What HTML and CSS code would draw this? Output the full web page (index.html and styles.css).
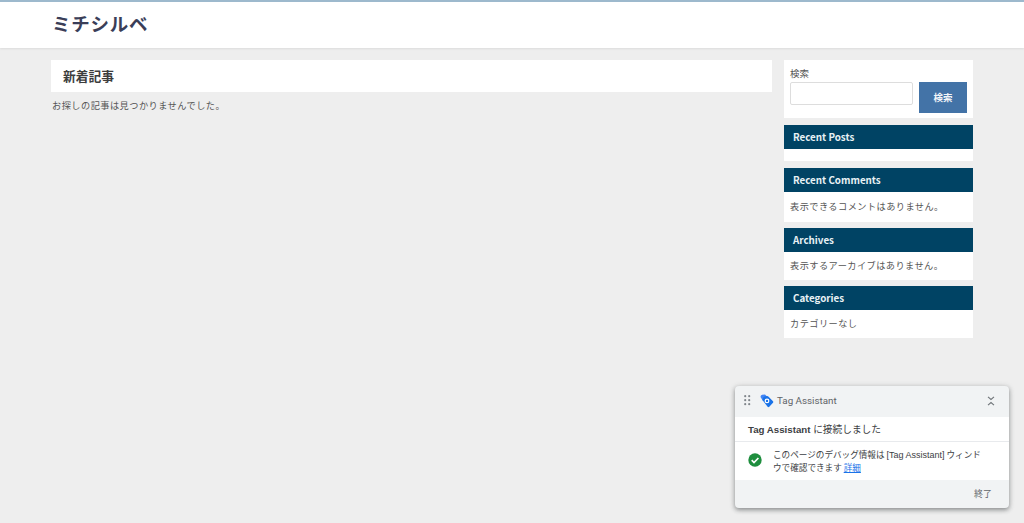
FILE: index.html
```html
<!DOCTYPE html>
<html lang="ja">
<head>
<meta charset="utf-8">
<title>ミチシルベ</title>
<link rel="stylesheet" href="styles.css">
</head>
<body>
<header class="site-header"><div class="logo">ミチシルベ</div></header>
<div class="layout">
  <main class="content">
    <h1 class="page-title">新着記事</h1>
    <p class="not-found">お探しの記事は見つかりませんでした。</p>
  </main>
  <aside class="sidebar">
    <section class="search">
      <div class="search-label">検索</div>
      <div class="search-row">
        <input class="search-input" type="text" aria-label="検索">
        <button class="search-btn" type="button">検索</button>
      </div>
    </section>
    <section class="widget widget-posts"><h2 class="widget-title">Recent Posts</h2></section>
    <section class="widget widget-comments"><h2 class="widget-title">Recent Comments</h2><p class="widget-text">表示できるコメントはありません。</p></section>
    <section class="widget widget-archives"><h2 class="widget-title">Archives</h2><p class="widget-text">表示するアーカイブはありません。</p></section>
    <section class="widget widget-categories"><h2 class="widget-title">Categories</h2><p class="widget-text">カテゴリーなし</p></section>
  </aside>
</div>
<div class="ta-popup">
  <div class="ta-head">
    <svg class="ta-grip" width="7" height="11" viewBox="0 0 7 11"><g fill="#80868b"><circle cx="1.2" cy="1.2" r="1.1"/><circle cx="5.2" cy="1.2" r="1.1"/><circle cx="1.2" cy="5.2" r="1.1"/><circle cx="5.2" cy="5.2" r="1.1"/><circle cx="1.2" cy="9.2" r="1.1"/><circle cx="5.2" cy="9.2" r="1.1"/></g></svg>
    <svg class="ta-logo" width="14" height="14" viewBox="0 0 14 14"><path d="M0.5 3 Q0.5 1 2.2 0.7 L5 0.5 L7.5 3 L3 7 Z" fill="#4285f4"/><path d="M2.6 6.2 Q2.4 3.4 4.4 2.6 L7 2 Q8 2 8.6 2.8 L13 7.3 Q13.7 8 13 8.8 L9.3 12.8 Q8.5 13.6 7.6 12.8 Z" fill="#1a73e8"/><circle cx="7" cy="6.9" r="2.4" fill="#fff"/><circle cx="7" cy="6.9" r="1.2" fill="#1a73e8"/></svg>
    <span class="ta-name">Tag Assistant</span>
    <svg class="ta-collapse" width="8" height="10" viewBox="0 0 8 10"><path d="M1 0.8 L4 3.4 L7 0.8 M1 9.2 L4 6.6 L7 9.2" fill="none" stroke="#6f7478" stroke-width="1.1"/></svg>
  </div>
  <div class="ta-connected"><b class="ta-strong">Tag Assistant</b> に接続しました</div>
  <div class="ta-msg">
    <svg class="ta-check" width="14" height="14" viewBox="0 0 14 14"><circle cx="7" cy="7" r="6.7" fill="#1e8e3e"/><path d="M3.7 7.2 L6 9.5 L10.4 5" fill="none" stroke="#fff" stroke-width="1.7"/></svg>
    <p class="ta-text">このページのデバッグ情報は <span class="ta-latin">[Tag Assistant]</span> ウィンドウで確認できます <a class="ta-link" href="#">詳細</a></p>
  </div>
  <div class="ta-foot"><span class="ta-end">終了</span></div>
</div>
</body>
</html>
```

FILE: styles.css
```css
* { box-sizing: border-box; }
html, body { margin: 0; padding: 0; height: 523px; overflow: hidden; }
body {
  background: #eeeeee;
  color: #444;
  font-family: "Noto Sans CJK JP", "Noto Sans", sans-serif;
  font-size: 10px;
}
.site-header {
  height: 48px;
  background: #fff;
  border-top: 2px solid #9db9cd;
  box-shadow: 0 1px 2px rgba(0,0,0,.08);
  padding-left: 52px;
}
.logo {
  font-size: 18.5px;
  font-weight: 700;
  line-height: 43px;
  color: #3a3e58;
  letter-spacing: .75px;
}
.layout {
  display: flex;
  gap: 12px;
  padding: 12px 0 0 51px;
}
.content { width: 721px; }
.page-title {
  margin: 0;
  height: 32px;
  background: #fff;
  padding-left: 12px;
  font-size: 12.75px;
  font-weight: 700;
  line-height: 32px;
  color: #3d3d3d;
}
.not-found { margin: 6px 0 0 1px; font-size: 9.2px; letter-spacing: .47px; line-height: 15px; color: #555; }
.sidebar { width: 189px; display: flex; flex-direction: column; }
.search { height: 58px; background: #fff; padding: 6px 6px 0; }
.search-label { font-size: 9.5px; line-height: 14px; height: 16px; color: #555; }
.search-row { display: flex; align-items: flex-start; gap: 6px; }
.search-input { width: 123px; height: 23px; border: 1px solid #ddd; border-radius: 2px; background: #fff; padding: 0; }
.search-btn {
  width: 48px; height: 31px; border: 0; padding: 0 0 2px;
  background: #4373a7; color: #f2f5f9;
  font-family: inherit; font-size: 9.5px; font-weight: 700;
}
.widget { background: #fff; margin-top: 7px; }
.widget-posts { height: 36px; }
.widget-comments { height: 54px; margin-top: 7px; }
.widget-archives { height: 52px; margin-top: 6px; }
.widget-categories { height: 52px; margin-top: 6px; }
.widget-title {
  margin: 0;
  height: 24px;
  background: #004364;
  color: #e8f1f5;
  padding-left: 9px;
  font-family: "Noto Sans CJK JP", "Noto Sans", sans-serif;
  font-size: 9.8px;
  font-weight: 700;
  line-height: 24px;
}
.widget-text { margin: 0; padding: 7px 6px 0; font-size: 9.2px; letter-spacing: .45px; line-height: 15px; color: #555; }
.widget-archives .widget-text, .widget-categories .widget-text { padding-top: 6px; }
.ta-popup {
  position: absolute;
  left: 735px;
  top: 386px;
  width: 274px;
  height: 122px;
  border-radius: 4px;
  background: #f1f3f4;
  box-shadow: 0 2px 4px rgba(60,64,67,.45), 0 1px 6px rgba(60,64,67,.2);
  overflow: hidden;
  display: flex;
  flex-direction: column;
  color: #3c4043;
}
.ta-head { height: 31px; display: flex; align-items: center; padding-left: 9px; padding-bottom: 2px; flex: none; }
.ta-grip { margin-right: 9px; }
.ta-logo { margin-right: 3px; }
.ta-name { font-family: "Roboto", "Liberation Sans", sans-serif; font-size: 9.8px; color: #5f6368; }
.ta-collapse { margin-left: auto; margin-right: 14px; }
.ta-connected {
  height: 25px; flex: none; background: #fff;
  border-bottom: 1px solid #e8eaed;
  padding-left: 13px;
  font-family: "Liberation Sans", "Noto Sans CJK JP", sans-serif;
  font-size: 9.7px; line-height: 25px; color: #3c4043;
}
.ta-strong { font-weight: 700; }
.ta-msg { height: 38px; flex: none; background: #fff; display: flex; padding: 6px 24px 0 13px; }
.ta-check { margin-top: 5px; margin-right: 11px; flex: none; }
.ta-text {
  margin: 0;
  font-family: "Noto Sans CJK JP", sans-serif;
  font-size: 8.6px; line-height: 13px; color: #3c4043;
}
.ta-latin { font-family: "Liberation Sans", sans-serif; font-size: 9px; line-height: 1; }
.ta-link { color: #1a73e8; }
.ta-foot { flex: 1; display: flex; justify-content: flex-end; align-items: center; padding: 0 17px 2px 0; }
.ta-end { font-size: 9px; color: #5f6368; }
```
